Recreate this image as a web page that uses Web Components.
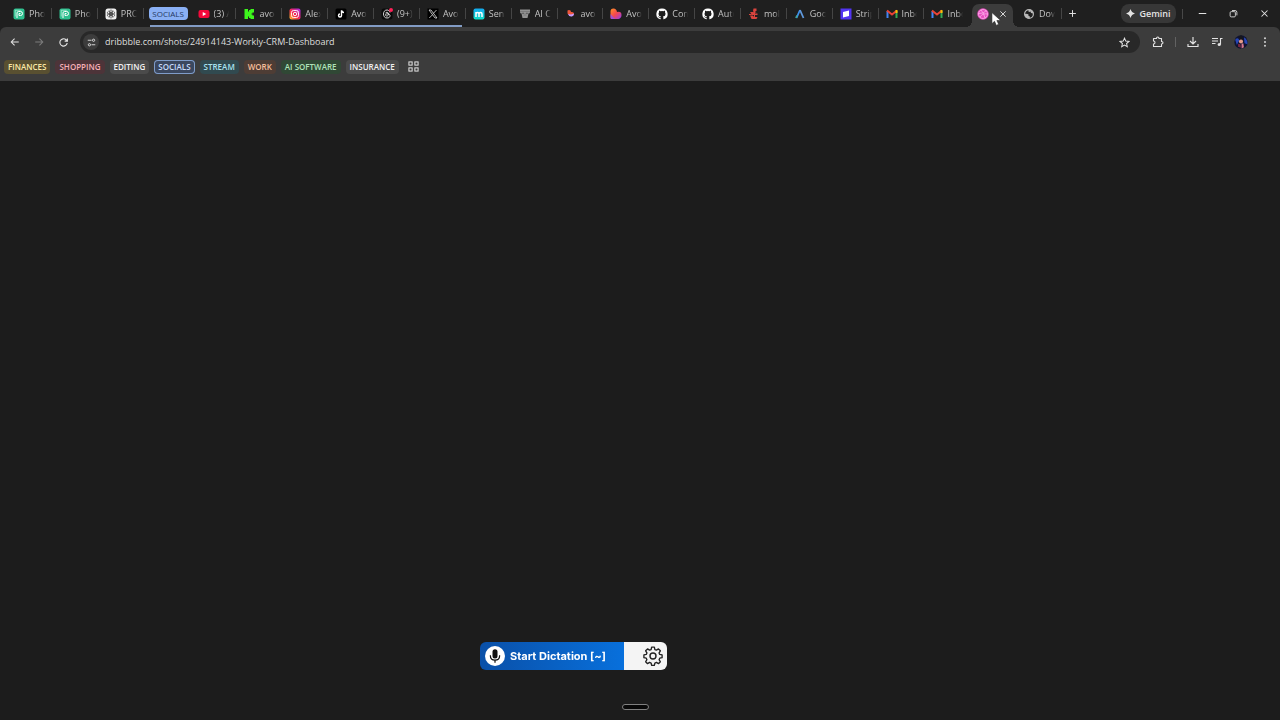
<!DOCTYPE html>
<html lang="en">
<head>
<meta charset="utf-8">
<title>Workly CRM Dashboard</title>
<style>
html,body{margin:0;height:100%;background:#1c1c1c}
body{font:9px/12px "Open Sans","Noto Sans",sans-serif;color:#e3e3e3;overflow:hidden}
</style>
</head>
<body>
<browser-window></browser-window>
<script>
const ICONS = {
pho:`<rect x="1" y="1" width="22" height="22" rx="4" fill="#2fc08f"/><path d="M8 20V10q0-3 3-3h4q4 0 4 4t-4 4h-3v-4h3" fill="none" stroke="#fff" stroke-width="2"/><path d="M4.500 17V4.500h11" fill="none" stroke="#b9f0da" stroke-width="1.4"/>`,
gpt:`<rect x="1" y="1" width="22" height="22" rx="5" fill="#f2f2f2"/><g fill="none" stroke="#333" stroke-width="1.100"><rect x="9" y="4" width="6" height="10" rx="3"/><rect x="9" y="4" width="6" height="10" rx="3" transform="rotate(60 12 12)"/><rect x="9" y="4" width="6" height="10" rx="3" transform="rotate(120 12 12)"/><rect x="9" y="4" width="6" height="10" rx="3" transform="rotate(180 12 12)"/><rect x="9" y="4" width="6" height="10" rx="3" transform="rotate(240 12 12)"/><rect x="9" y="4" width="6" height="10" rx="3" transform="rotate(300 12 12)"/></g>`,
youtube:`<rect x="1" y="4" width="22" height="16" rx="4" fill="#f5083a"/><path d="M9.500 8l7 4-7 4z" fill="#fff"/>`,
kick:`<path d="M3 2h7v5h2V4h3V2h7v7h-3v2h-2v2h2v2h3v7h-7v-2h-3v-3h-2v5H3z" fill="#3df51c"/>`,
instagram:`<defs><linearGradient id="g" x1="0" y1="1" x2="1" y2="0"><stop stop-color="#ffc52e"/><stop offset=".45" stop-color="#f5294d"/><stop offset="1" stop-color="#a32bf0"/></linearGradient></defs><rect x="1" y="1" width="22" height="22" rx="4" fill="url(#g)"/><g fill="none" stroke="#fff" stroke-width="1.8"><rect x="5" y="5" width="14" height="14" rx="4"/><circle cx="12" cy="12" r="3.400"/></g><circle cx="16.200" cy="7.800" r="1" fill="#fff"/>`,
tiktok:`<rect x="1" y="1" width="22" height="22" rx="3" fill="#000"/><path d="M13 5v10a3 3 0 1 1-3-3" fill="none" stroke="#fff" stroke-width="2.800"/><path d="M13 5q1 4 5 4" fill="none" stroke="#fff" stroke-width="2.800"/>`,
threads:`<rect x="1" y="1" width="22" height="22" rx="5" fill="#0a0a0a"/><path d="M18 9c-1-4-4-5-6-5-5 0-7 4-7 8s2 8 7 8c4 0 6-2 6-5 0-4-9-5-9-1 0 3 6 3 6-2 0-4-5-4-6-2" fill="none" stroke="#ddd" stroke-width="1.900"/><circle cx="20" cy="4" r="4" fill="#ff2258"/>`,
x:`<rect x="1" y="1" width="22" height="22" fill="#000"/><path d="M4 4h4l12 16h-4zM19 4l-6.500 7M11 13.500L4.500 20" fill="none" stroke="#eee" stroke-width="1.500"/>`,
m:`<defs><linearGradient id="m" x1="0" y1="0" x2="0" y2="1"><stop stop-color="#13a9ef"/><stop offset="1" stop-color="#13e0c8"/></linearGradient></defs><rect x="1" y="1" width="22" height="22" rx="4" fill="url(#m)"/><path d="M6 18V8v4q0-3 3-3t3 3v6-6q0-3 3-3t3 3v6" fill="none" stroke="#fff" stroke-width="3"/>`,
store:`<path d="M2 3h20v5q0 3-3 3-2 0-3-2-1 2-4 2t-4-2q-1 2-3 2-3 0-3-3zM5 11h14l-2 9H7z" fill="#929292"/><path d="M2 7h20M9 14h6" stroke="#6b6b6b" stroke-width="1.200"/>`,
heartSmall:`<path d="M5 5l3-1q4 0 4 4 6-1 6 4l-3 4-6-1-4-4z" fill="#f0573b"/><path d="M6 12l6 1 6-2q1 4-4 6-6 1-8-5z" fill="#c49bff"/>`,
heart:`<defs><linearGradient id="h" x1="0" y1="0" x2="1" y2="1"><stop stop-color="#ff9227"/><stop offset=".5" stop-color="#f5474e"/><stop offset="1" stop-color="#903df5"/></linearGradient></defs><path d="M1 7q0-6 6-6 6 0 7 7 9-2 9 6 0 6-6 8H3q-2 0-2-3z" fill="url(#h)"/><path d="M1 12l9 10H3q-2 0-2-3z" fill="#8d52f2" opacity=".8"/>`,
github:`<path fill="#fff" d="M12 1a11 11 0 0 0-3.500 21.500c.5.100.8-.3.800-.6v-2c-3 .7-3.700-1.300-3.700-1.300-.5-1.300-1.200-1.600-1.200-1.600-1-.7.100-.7.100-.7 1.100.1 1.700 1.100 1.700 1.100 1 1.700 2.600 1.200 3.200.9.100-.7.400-1.200.7-1.500-2.500-.3-5-1.200-5-5.500 0-1.200.400-2.200 1.100-3-.1-.2-.5-1.400.1-2.900 0 0 .9-.3 3 1.100a10 10 0 0 1 5.500 0c2.100-1.400 3-1.100 3-1.100.6 1.500.2 2.700.1 2.900.7.800 1.100 1.800 1.100 3 0 4.300-2.600 5.200-5.100 5.500.400.400.8 1 .8 2.100v3c0 .3.200.7.800.6A11 11 0 0 0 12 1z"/>`,
red:`<g fill="#d9443e"><path d="M11 1h6v5h-3l3 3h-5l-2-3zM4 8h7l2 3h6v3H8zM4 15h6l2 3h7l-2 4H7zM2 12h5v2H2z"/><path d="M12 6h2v15h-2z"/></g>`,
ads:`<path d="M12 4L5 20" stroke="#3d92ee" stroke-width="3.500"/><path d="M12 4l7 16" stroke="#5f98dc" stroke-width="3.500"/><path d="M6 15L4 20" stroke="#3fa8a0" stroke-width="3.500"/>`,
stripe:`<rect x="1" y="1" width="22" height="22" fill="#5235f2"/><path d="M6 8l12-3v11L6 19z" fill="#fff"/>`,
gmail:`<path d="M3 20V6" stroke="#4285f4" stroke-width="4"/><path d="M21 20V6" stroke="#34a853" stroke-width="4"/><path d="M2 5l10 8 10-8" fill="none" stroke="#ea4335" stroke-width="4"/><path d="M21 4v6" stroke="#fbbc04" stroke-width="4"/>`,
dribbble:`<circle cx="12" cy="12" r="11.500" fill="#e64fc0"/><g fill="none" stroke="#ffb4ec" stroke-width="1.500"><circle cx="12" cy="12" r="9"/><path d="M8 4q6 6 8 16M3 11q10 1 16-6M6 18q5-8 15-6"/></g>`,
globe:`<circle cx="12" cy="12" r="8.800" fill="none" stroke="#b8b8b8" stroke-width="2.400"/><path d="M3 12q5-1 8 1v3l3 1-1 4q-9 0-10-9zM12 3q-3 3 0 5l3-1 1 3 5 1q0-7-9-8z" fill="#b8b8b8"/>`,
plus:`<path d="M12 3v18M3 12h18" stroke="currentColor" stroke-width="2.600"/>`,
close:`<path d="M4 4l16 16M20 4L4 20" stroke="currentColor" stroke-width="2.800"/>`,
spark:`<path d="M12 0q2.500 9.500 12 12-9.500 2.500-12 12Q9.500 14.500 0 12 9.500 9.500 12 0z" fill="currentColor"/>`,
min:`<path d="M2 12h20" stroke="currentColor" stroke-width="2.700"/>`,
restore:`<g fill="none" stroke="currentColor" stroke-width="2.300"><rect x="3" y="7" width="14" height="14" rx="3"/><path d="M8 4h8q5 0 5 5v8"/></g>`,
back:`<path d="M21 12H4M11 4l-8 8 8 8" fill="none" stroke="currentColor" stroke-width="2.500"/>`,
fwd:`<path d="M3 12h17M13 4l8 8-8 8" fill="none" stroke="currentColor" stroke-width="2.500"/>`,
reload:`<path d="M20 13a8 8 0 1 1-2.500-7L20 8.500M20.500 3v6h-6" fill="none" stroke="currentColor" stroke-width="2.500"/>`,
tune:`<g fill="none" stroke="currentColor" stroke-width="2.400"><path d="M12 6h-10M12 18h10"/><circle cx="17.500" cy="6" r="3"/><circle cx="6.500" cy="18" r="3"/></g>`,
star:`<path d="M12 2.500l2.800 6.400 7 .7-5.300 4.600 1.600 6.900-6.100-3.700-6.100 3.700 1.600-6.900L2.200 9.600l7-.7z" fill="none" stroke="currentColor" stroke-width="2.200"/>`,
puzzle:`<path d="M3 5h6q0-3 2.500-3T14 5h5v6q3 0 3 2.500T19 16v5H3v-5q3 0 3-3t-3-3z" fill="none" stroke="currentColor" stroke-width="2.200" stroke-linejoin="round"/>`,
download:`<path d="M12 2v13M6 10l6 6 6-6M2 16v5h20v-5" fill="none" stroke="currentColor" stroke-width="2.300"/>`,
media:`<path d="M2 5h12M2 10h12M2 15h7M19 17V5h4" fill="none" stroke="currentColor" stroke-width="2.200"/><circle cx="16.500" cy="17" r="3.200" fill="currentColor"/>`,
avatar:`<circle cx="12" cy="12" r="11.500" fill="#10132f"/><path d="M2 8q5-5 7 1l-4 8zM17 4q7 4 6 12l-5-2z" fill="#2746b5"/><path d="M12 0l3 4-1 4h-4L9 4z" fill="#17171b"/><circle cx="12" cy="11" r="3.500" fill="#e59a87"/><path d="M7 15l4 1 1 6-5-2z" fill="#7a2742"/><path d="M13 15l3-1 1 7-4 2z" fill="#d3768e"/>`,
dots:`<g fill="currentColor"><circle cx="12" cy="3" r="2.200"/><circle cx="12" cy="12" r="2.200"/><circle cx="12" cy="21" r="2.200"/></g>`,
grid:`<g fill="none" stroke="currentColor" stroke-width="2.200"><rect x="2" y="2" width="7" height="7"/><rect x="15" y="2" width="7" height="7"/><rect x="2" y="15" width="7" height="7"/><rect x="15" y="15" width="7" height="7"/></g>`,
mic:`<circle cx="12" cy="12" r="12" fill="#fff"/><rect x="9" y="4" width="6" height="11" rx="3" fill="#111"/><path d="M6.500 11v1q0 5 5.500 5t5.500-5v-1M12 17v3" fill="none" stroke="#111" stroke-width="1.500"/>`,
gear:`<g fill="none" stroke="#222" stroke-width="1.700" stroke-linejoin="round"><path d="M10.300 1.500h3.400l.7 3 1.900.8 2.600-1.600 2.400 2.400-1.600 2.600.8 1.900 3 .7v3.400l-3 .7-.8 1.900 1.600 2.600-2.400 2.400-2.600-1.600-1.900.8-.7 3h-3.400l-.7-3-1.900-.8-2.600 1.600-2.400-2.400 1.600-2.600-.8-1.900-3-.7v-3.400l3-.7.8-1.900-1.600-2.600 2.400-2.400 2.600 1.600 1.900-.8z" transform="translate(.6 0) scale(.95)"/><circle cx="12" cy="12" r="3.600"/></g>`,
cursor:`<path d="M5 1v19l4.500-4 3 7 4-2-3-6.500H20z" fill="#fff" stroke="#222" stroke-width="1"/>`
};

class Base extends HTMLElement {
  connectedCallback() {
    if (this.shadowRoot) return;
    this.attachShadow({mode:'open'}).innerHTML = `<style>*{box-sizing:border-box}button{font:inherit;color:inherit;background:none;border:0;margin:0;padding:0}${this.css()}</style>${this.html()}`;
  }
  attr(n) { return this.getAttribute(n) || ''; }
}

customElements.define('ui-icon', class extends Base {
  css() { const s = this.attr('size') || 12; return `:host{display:block;flex:none;width:${s}px;height:${s}px}svg{display:block;width:100%;height:100%}`; }
  html() { return `<svg viewBox="0 0 24 24" aria-hidden="true">${ICONS[this.attr('name')]}</svg>`; }
});

customElements.define('icon-button', class extends Base {
  css() { return `:host{display:block;flex:none;width:24px;height:22px}button{display:flex;width:100%;height:100%;align-items:center;justify-content:center}`; }
  html() { return `<button aria-label="${this.attr('label')}"><ui-icon name="${this.attr('icon')}" size="${this.attr('size')||12}"></ui-icon></button>`; }
});

customElements.define('browser-tab', class extends Base {
  css() { return `
:host{display:block;flex:1 1 0;min-width:0;height:23px;color:#c4c4c4}
button{display:flex;align-items:center;gap:4px;width:100%;height:19px;padding:0 7px;position:relative;text-align:left}
button::after{content:"";position:absolute;right:0;top:4px;width:1px;height:11px;background:#454545}
:host([plain]) button::after{display:none}
span{flex:1;min-width:0;overflow:hidden;white-space:nowrap;mask-image:linear-gradient(90deg,#000 65%,transparent)}`; }
  html() { return `<button role="tab"><ui-icon name="${this.attr('icon')}"></ui-icon><span><slot></slot></span></button>`; }
});

customElements.define('active-tab', class extends Base {
  css() { return `
:host{display:block;flex:1 1 0;min-width:0;height:23px;position:relative}
.tab{display:flex;align-items:center;justify-content:space-between;height:23px;margin:0 3px 0 2px;padding:0 6px 4px 5px;background:#3c3c3c;border-radius:7px 7px 0 0}
.tab::before,.tab::after{content:"";position:absolute;bottom:0;width:6px;height:6px}
.tab::before{left:-4px;background:radial-gradient(circle at 0 0,transparent 6px,#3c3c3c 6px)}
.tab::after{right:-3px;background:radial-gradient(circle at 100% 0,transparent 6px,#3c3c3c 6px)}
.tab icon-button{width:8px;height:12px}
.cursor{position:absolute;left:19px;top:8px}`; }
  html() { return `<div class="tab" role="tab" aria-selected="true"><ui-icon name="dribbble"></ui-icon><icon-button icon="close" size="8" label="Close tab"></icon-button></div><ui-icon class="cursor" name="cursor" size="14"></ui-icon>`; }
});

customElements.define('tab-group', class extends Base {
  css() { return `:host{display:block;flex:none;box-sizing:border-box;width:47px;height:23px;padding:3px 3px 0 5px}
button{width:100%;height:13px;border-radius:4px;background:#8ab0f5;color:#26385f;font-size:8px;line-height:13px}`; }
  html() { return `<button><slot></slot></button>`; }
});

const TABS = [['youtube','(3) A'],['kick','avoc'],['instagram','Alex'],['tiktok','Avo'],['threads','(9+)'],['x','Avo'],['m','Sen'],['store','AI C'],['heartSmall','avoc'],['heart','Avo'],['github','Con'],['github','Auto'],['red','mol'],['ads','Goo'],['stripe','Strip'],['gmail','Inbo'],['gmail','Inbo']];
const tab = ([i,t], extra='') => `<browser-tab icon="${i}" ${extra}>${t}</browser-tab>`;

customElements.define('tab-strip', class extends Base {
  css() { return `
:host{display:flex;height:27px;box-sizing:border-box;padding:4px 0 0 6px;background:#1f1f1f}
.tabs{display:flex;flex:0 1 1056px;min-width:0}
.group{display:flex;flex:6 1 47px;min-width:0;position:relative}
.group::after{content:"";position:absolute;left:6px;right:4px;bottom:0;height:2px;background:#829cc5}
.loose{display:flex;min-width:0}
.before{flex:3 1 0}
.after{flex:13 1 0}
.new{width:20px;height:19px}
.tools{display:flex;height:19px;align-items:center;margin-left:auto}
.gemini{display:flex;align-items:center;justify-content:center;gap:4px;width:55px;height:19px;border-radius:8px;background:#373737;font-weight:600}
i{width:1px;height:10px;background:#484848;margin:0 4px 0 6px}
.tools icon-button{width:31px;height:19px}`; }
  html() { return `<div class="tabs" role="tablist">
<div class="loose before">${tab(['pho','Pho'])}${tab(['pho','Pho'])}${tab(['gpt','PRO'])}</div>
<div class="group"><tab-group>SOCIALS</tab-group>${TABS.slice(0,6).map(t=>tab(t)).join('')}</div>
<div class="loose after">${TABS.slice(6).map((t,i)=>tab(t,i===10?'plain':'')).join('')}<active-tab></active-tab>${tab(['globe','Dow'])}</div>
</div><icon-button class="new" icon="plus" size="9" label="New tab"></icon-button>
<div class="tools"><button class="gemini"><ui-icon name="spark" size="9"></ui-icon>Gemini</button><i></i><icon-button icon="min" size="9" label="Minimize"></icon-button><icon-button icon="restore" size="9" label="Restore"></icon-button><icon-button icon="close" size="9" label="Close"></icon-button></div>`; }
});

customElements.define('address-bar', class extends Base {
  css() { return `
:host{display:flex;height:30px;box-sizing:border-box;align-items:center;padding:0 3px}
icon-button[off]{color:#7d7d7d}
label{display:flex;flex:1;align-items:center;height:22px;margin:0 6px 0 5px;background:#282828;border-radius:11px;padding:0 4px 0 3px}
.site{width:16px;height:16px;border-radius:8px;background:#3c3c3c}
input{flex:1;min-width:0;font:inherit;color:#dedede;background:none;border:0;outline:0;padding:0;margin-left:6px}
i{width:1px;height:10px;background:#626262;margin:0 5px}`; }
  html() { return `<icon-button icon="back" size="10" label="Back"></icon-button><icon-button off icon="fwd" size="10" label="Forward"></icon-button><icon-button icon="reload" size="11" label="Reload"></icon-button>
<label><icon-button class="site" icon="tune" size="9" label="Site information"></icon-button><input aria-label="Address" value="dribbble.com/shots/24914143-Workly-CRM-Dashboard"><icon-button icon="star" size="11" label="Bookmark"></icon-button></label>
<icon-button icon="puzzle" label="Extensions"></icon-button><i></i><icon-button icon="download" label="Downloads"></icon-button><icon-button icon="media" label="Media"></icon-button><icon-button icon="avatar" size="14" label="Profile"></icon-button><icon-button icon="dots" size="10" label="Menu"></icon-button>`; }
});

customElements.define('bookmark-chip', class extends Base {
  css() { return `:host{display:block;flex:none}button{display:block;height:14px;padding:0 4px;border-radius:4px;background:${this.attr('bg')};color:${this.attr('fg')};font-size:8px;line-height:14px;font-weight:600;white-space:nowrap}:host([outlined]) button{box-shadow:inset 0 0 0 1px #7f9cc9}`; }
  html() { return `<button><slot></slot></button>`; }
});

customElements.define('bookmarks-bar', class extends Base {
  css() { return `:host{display:flex;box-sizing:border-box;height:24px;align-items:center;gap:5px;padding:0 4px 5px}icon-button{width:20px;height:14px}`; }
  html() { return [['FINANCES','#595031','#fbe9a6'],['SHOPPING','#4d3439','#f6aeb7'],['EDITING','#4b4b4b','#f0f0f0'],['SOCIALS','#3b475e','#c7dafa','outlined'],['STREAM','#314a50','#a9e2ef'],['WORK','#4e3d35','#f6bf9c'],['AI SOFTWARE','#304835','#aee3b8'],['INSURANCE','#4b4b4b','#f0f0f0']].map(([t,b,f,o=''])=>`<bookmark-chip bg="${b}" fg="${f}" ${o}>${t}</bookmark-chip>`).join('') + `<icon-button icon="grid" size="11" label="All bookmarks"></icon-button>`; }
});

customElements.define('dictation-widget', class extends Base {
  css() { return `
:host{display:flex;height:28px;border-radius:6px;overflow:hidden}
.start{display:flex;align-items:center;gap:5px;width:144px;padding:0 0 0 5px;background:linear-gradient(90deg,#0a50a8,#0870dc);color:#fff;font:700 11px/16px Inter,"Open Sans",sans-serif;white-space:nowrap}
.settings{display:flex;align-items:center;justify-content:flex-end;width:43px;padding-right:4px;background:#f4f4f4}`; }
  html() { return `<button class="start"><ui-icon name="mic" size="20"></ui-icon>Start Dictation [~]</button><button class="settings" aria-label="Dictation settings"><ui-icon name="gear" size="20"></ui-icon></button>`; }
});

customElements.define('browser-window', class extends Base {
  css() { return `
:host{display:flex;flex-direction:column;min-height:100vh;background:#1f1f1f}
.toolbar{background:#3c3c3c;border-radius:6px 6px 0 0}
main{flex:1;background:#1c1c1c}
dictation-widget{position:fixed;bottom:50px;left:calc(50% - 160px)}
.handle{position:fixed;bottom:10px;left:calc(50% - 18px);width:27px;height:6px;border:1px solid #808080;border-radius:3px;background:#080808}`; }
  html() { return `<tab-strip></tab-strip><div class="toolbar"><address-bar></address-bar><bookmarks-bar></bookmarks-bar></div><main></main><dictation-widget></dictation-widget><button class="handle" aria-label="Show panel"></button>`; }
});
</script>
</body>
</html>
